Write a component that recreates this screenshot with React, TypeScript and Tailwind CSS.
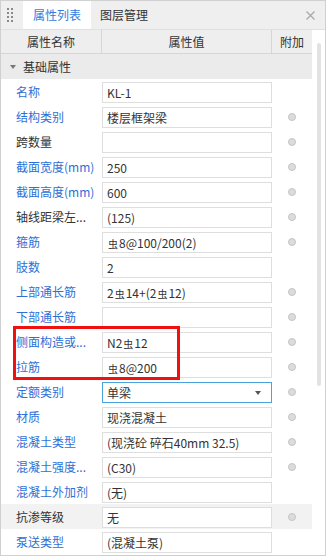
import React from 'react';

const R = '虫';

type Row = {
  label: string;
  value: string;
  blue?: boolean;
  dot?: boolean;
  select?: boolean;
  hover?: boolean;
};

const rows: Row[] = [
  { label: '名称', value: 'KL-1', blue: true },
  { label: '结构类别', value: '楼层框架梁', blue: true, dot: true },
  { label: '跨数量', value: '', dot: true },
  { label: '截面宽度(mm)', value: '250', blue: true, dot: true },
  { label: '截面高度(mm)', value: '600', blue: true, dot: true },
  { label: '轴线距梁左...', value: '(125)', dot: true },
  { label: '箍筋', value: `${R}8@100/200(2)`, blue: true, dot: true },
  { label: '肢数', value: '2', blue: true },
  { label: '上部通长筋', value: `2${R}14+(2${R}12)`, blue: true, dot: true },
  { label: '下部通长筋', value: '', blue: true, dot: true },
  { label: '侧面构造或...', value: `N2${R}12`, blue: true, dot: true },
  { label: '拉筋', value: `${R}8@200`, blue: true, dot: true },
  { label: '定额类别', value: '单梁', blue: true, dot: true, select: true },
  { label: '材质', value: '现浇混凝土', blue: true, dot: true },
  { label: '混凝土类型', value: '(现浇砼 碎石40mm 32.5)', blue: true, dot: true },
  { label: '混凝土强度...', value: '(C30)', blue: true, dot: true },
  { label: '混凝土外加剂', value: '(无)', blue: true },
  { label: '抗渗等级', value: '无', dot: true, hover: true },
  { label: '泵送类型', value: '(混凝土泵)', blue: true },
];

// splits value so the rebar grade symbol can be sized down a little
const Value = ({ text }: { text: string }) => (
  <>
    {text.split(R).map((part, i) => (
      <React.Fragment key={i}>
        {i > 0 && <span className="text-[10px] mx-[1px]">{R}</span>}
        {part}
      </React.Fragment>
    ))}
  </>
);

const DragHandle = () => (
  <div className="grid grid-cols-2 gap-x-[2px] gap-y-[2px] ml-[6px] mr-[10px]">
    {Array.from({ length: 8 }).map((_, i) => (
      <div key={i} className="w-[2px] h-[2px] bg-[#8a8a8a]" />
    ))}
  </div>
);

const PropRow = ({ row }: { row: Row }) => (
  <div className={`flex h-[25px] ${row.hover ? 'bg-[#f2f2f2]' : 'bg-white'}`}>
    <div
      className={`w-[101px] pl-[15px] flex items-center truncate ${
        row.blue ? 'text-[#2e6fd6]' : 'text-[#333333]'
      }`}
    >
      {row.label}
    </div>
    <div className="w-[170px] pt-[3px]">
      <div
        className={`h-[21px] bg-white border flex items-center pl-[4px] pr-[10px] text-[#333333] whitespace-nowrap overflow-hidden ${
          row.select ? 'border-[#4aa3df]' : 'border-[#dedede]'
        }`}
      >
        <span className="flex-1">
          <Value text={row.value} />
        </span>
        {row.select && (
          <span className="w-0 h-0 border-l-[3px] border-r-[3px] border-t-[4px] border-l-transparent border-r-transparent border-t-[#555555]" />
        )}
      </div>
    </div>
    <div className="w-[40px] flex items-center justify-center">
      {row.dot && (
        <div className="w-[8px] h-[8px] rounded-full bg-[#dcdcdc] border border-[#c4c4c4]" />
      )}
    </div>
  </div>
);

export default function App() {
  return (
    <div className="w-[326px] h-[556px] border border-[#d0d0d0] bg-white flex flex-col overflow-hidden text-[12px] font-['Noto_Sans_CJK_SC',sans-serif] leading-none">
      {/* tab bar */}
      <div className="h-[29px] bg-[#efefef] flex items-stretch border-b border-[#e0e0e0]">
        <div className="flex items-center">
          <DragHandle />
        </div>
        <div className="w-[68px] bg-white flex items-center justify-center text-[#2f7de1]">
          属性列表
        </div>
        <div className="w-[66px] flex items-center justify-center text-[#333333]">
          图层管理
        </div>
        <div className="flex-1 flex items-center justify-end pr-[10px]">
          <svg width="9" height="9" viewBox="0 0 9 9">
            <path d="M0.5 0.5 L8.5 8.5 M8.5 0.5 L0.5 8.5" stroke="#a8a8a8" strokeWidth="1.2" />
          </svg>
        </div>
      </div>

      <div className="flex flex-1">
        <div className="w-[311px] relative">
          {/* header */}
          <div className="h-[24px] flex bg-[#eeeeee] border-b border-[#d6d6d6] text-[#333333]">
            <div className="w-[101px] border-r border-[#d6d6d6] flex items-center justify-center">
              属性名称
            </div>
            <div className="w-[170px] border-r border-[#d6d6d6] flex items-center justify-center">
              属性值
            </div>
            <div className="w-[40px] flex items-center justify-center">附加</div>
          </div>

          {/* group */}
          <div className="h-[25px] flex items-center bg-[#ebebeb] text-[#333333]">
            <span className="ml-[9px] mr-[7px] w-0 h-0 border-l-[3px] border-r-[3px] border-t-[4px] border-l-transparent border-r-transparent border-t-[#777777]" />
            基础属性
          </div>

          {rows.map((row) => (
            <PropRow key={row.label} row={row} />
          ))}

          {/* highlight box */}
          <div className="absolute left-[12px] top-[296px] w-[167px] h-[54px] border-[3px] border-[#f01010]" />
        </div>

        {/* scrollbar */}
        <div className="flex-1 pt-[13px] pl-[5px]">
          <div className="w-[4px] h-[343px] rounded-full bg-[#e2e2e2]" />
        </div>
      </div>
    </div>
  );
}
